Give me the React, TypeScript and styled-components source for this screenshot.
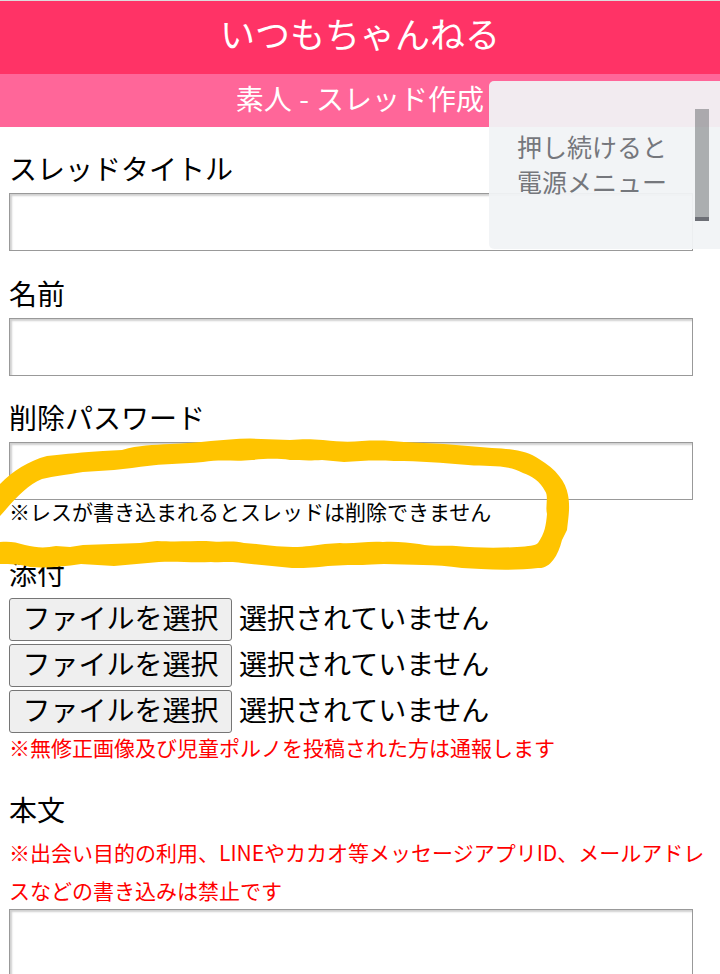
import React from "react";
import styled, { createGlobalStyle } from "styled-components";

const GlobalStyle = createGlobalStyle`
  *, *::before, *::after { box-sizing: border-box; }
  html, body { margin: 0; padding: 0; height: 974px; overflow: hidden; background: #fff; }
  button, input, textarea { font: inherit; }
`;

const Page = styled.div`
  position: relative;
  width: 720px;
  height: 974px;
  overflow: hidden;
  background: #fff;
  color: #000;
  font-family: "Noto Sans CJK JP", sans-serif;
  font-size: 28px;
`;

const SiteHeader = styled.h1`
  margin: 0;
  height: 74px;
  border-top: 1px solid #dcdcdc;
  background: #ff3366;
  color: #fff;
  font-size: 35px;
  font-weight: 400;
  line-height: 64px;
  text-align: center;
`;

const BoardTitle = styled.h2`
  margin: 0;
  height: 53px;
  background: #ff6699;
  color: #fff;
  font-size: 28px;
  font-weight: 400;
  line-height: 48px;
  word-spacing: 1px;
  text-align: center;
`;

const Form = styled.form`
  display: flex;
  flex-direction: column;
  padding: 20px 0 0 9px;
`;

const Group = styled.section<{ $height: number }>`
  display: flex;
  flex-direction: column;
  flex: none;
  height: ${(p) => p.$height}px;
`;

const Label = styled.label<{ $height?: number; $leading?: number }>`
  display: block;
  flex: none;
  height: ${(p) => p.$height ?? 46}px;
  line-height: ${(p) => p.$leading ?? 42}px;
  white-space: nowrap;
`;

const TextField = styled.input`
  display: block;
  flex: none;
  width: 684px;
  height: 58px;
  margin: 0;
  padding: 4px 8px;
  border: 1px solid #999;
  border-radius: 0;
  outline: none;
  background: #fff;
  box-shadow: inset 2px 2px 2px #d0d0d0;
`;

const BodyField = styled.textarea`
  display: block;
  flex: none;
  width: 684px;
  height: 200px;
  margin: 0;
  padding: 8px;
  border: 1px solid #999;
  border-radius: 0;
  outline: none;
  resize: none;
  background: #fff;
  box-shadow: inset 2px 2px 2px #d0d0d0;
`;

const Note = styled.p<{ $warning?: boolean; $leading?: number }>`
  margin: 0;
  color: ${(p) => (p.$warning ? "#ff0000" : "#000")};
  font-size: 21px;
  line-height: ${(p) => p.$leading ?? 23}px;
  white-space: nowrap;
`;

const FileRow = styled.div`
  display: flex;
  flex: none;
  height: 43px;
  margin-bottom: 3px;
  gap: 7px;
  line-height: 38px;
  white-space: nowrap;
`;

const FileButton = styled.button`
  width: 223px;
  height: 43px;
  padding: 0 0 5px;
  border: 1px solid #767676;
  border-radius: 3px;
  background: #efefef;
  color: #000;
  line-height: 36px;
  text-align: center;
`;

const PowerHint = styled.aside`
  position: absolute;
  top: 81px;
  right: 0;
  display: flex;
  justify-content: space-between;
  width: 231px;
  height: 168px;
  padding: 28px 11px 0 28px;
  border-radius: 5px 0 0 5px;
  background: rgba(241, 243, 245, 0.94);
  color: #75777c;
  font-size: 25px;
  line-height: 35px;
  white-space: nowrap;
`;

const HintText = styled.div`
  padding-top: 20px;
`;

const VolumeTrack = styled.div`
  width: 14px;
  height: 112px;
  border-bottom: 4px solid #6d6f76;
  background: rgba(99, 103, 106, 0.5);
  background-clip: padding-box;
`;

const Marker = styled.svg`
  position: absolute;
  top: 430px;
  left: 0;
  width: 600px;
  height: 150px;
  pointer-events: none;
`;

const attachments = [1, 2, 3];

export default function App() {
  return (
    <Page>
      <GlobalStyle />
      <SiteHeader>いつもちゃんねる</SiteHeader>
      <BoardTitle>素人 - スレッド作成</BoardTitle>
      <Form>
        <Group $height={125}>
          <Label htmlFor="title">スレッドタイトル</Label>
          <TextField id="title" />
        </Group>
        <Group $height={124}>
          <Label htmlFor="name">名前</Label>
          <TextField id="name" />
        </Group>
        <Group $height={156}>
          <Label htmlFor="password">削除パスワード</Label>
          <TextField id="password" />
          <Note>※レスが書き込まれるとスレッドは削除できません</Note>
        </Group>
        <Group $height={237}>
          <Label as="div">添付</Label>
          {attachments.map((id) => (
            <FileRow key={id}>
              <FileButton type="button">ファイルを選択</FileButton>
              <span>選択されていません</span>
            </FileRow>
          ))}
          <Note $warning>※無修正画像及び児童ポルノを投稿された方は通報します</Note>
        </Group>
        <Group $height={320}>
          <Label htmlFor="body" $height={45} $leading={40}>本文</Label>
          <Note $warning $leading={37.5}>
            ※出会い目的の利用、LINEやカカオ等メッセージアプリID、メールアドレ
            <br />
            スなどの書き込みは禁止です
          </Note>
          <BodyField id="body" />
        </Group>
      </Form>
      <Marker viewBox="0 0 600 150" aria-hidden="true">
        <path
          fill="#ffc400"
          d="M0 54 C13 41 28 31 47 26 C67 24 83 22 103 21 L122 20 C139 15 153 15 170 14 C200 13 222 9 250 8.5 L290 10 C302 9 311 9 323 10 C340 12 350 12 362 11 C380 10 392 11 404 12 L444 14 L492 18 C517 19 528 22 539 29 C556 39 566 52 568 65 C570 76 569 83 567 100 L562 110 C558 126 550 139 538 138 C521 140 500 140 481 139 L462 138 C434 134 412 135 384 134 C365 135 358 135 348 135 L328 136 C310 138 303 138 292 138 L272 136 L242 133 C230 131 222 133 211 132 C190 133 178 131 159 132 L114 136 L81 134 C62 137 45 138 30 137 C19 134 11 134 0 134 L0 112 C9 111 16 112 25 115 C37 118 46 118 56 116 L70 117 L83 115 L140 113 L157 111 C176 112 190 111 206 111 C223 113 231 110 244 113 C260 114 273 117 293 117 C306 117 315 115 325 114 L340 113 C354 114 367 111 383 112 C396 111 409 113 419 114 C434 117 446 115 456 116 C476 118 500 118 517 117 C529 116 535 116 538 113 C545 103 546 95 547 84 C545 76 549 66 545 61 C540 51 532 46 523 43 C507 34 489 37 468 35 C442 33 420 31 394 31 C374 30 360 31 344 32 L322 30 C306 31 300 30 290 30 C276 28 263 29 252 30 C235 32 222 29 203 32 C180 34 155 34 132 38 L114 40 L83 42 C65 45 55 46 42 49 C27 55 16 68 0 86 Z"
        />
      </Marker>
      <PowerHint>
        <HintText>
          押し続けると
          <br />
          電源メニュー
        </HintText>
        <VolumeTrack />
      </PowerHint>
    </Page>
  );
}
